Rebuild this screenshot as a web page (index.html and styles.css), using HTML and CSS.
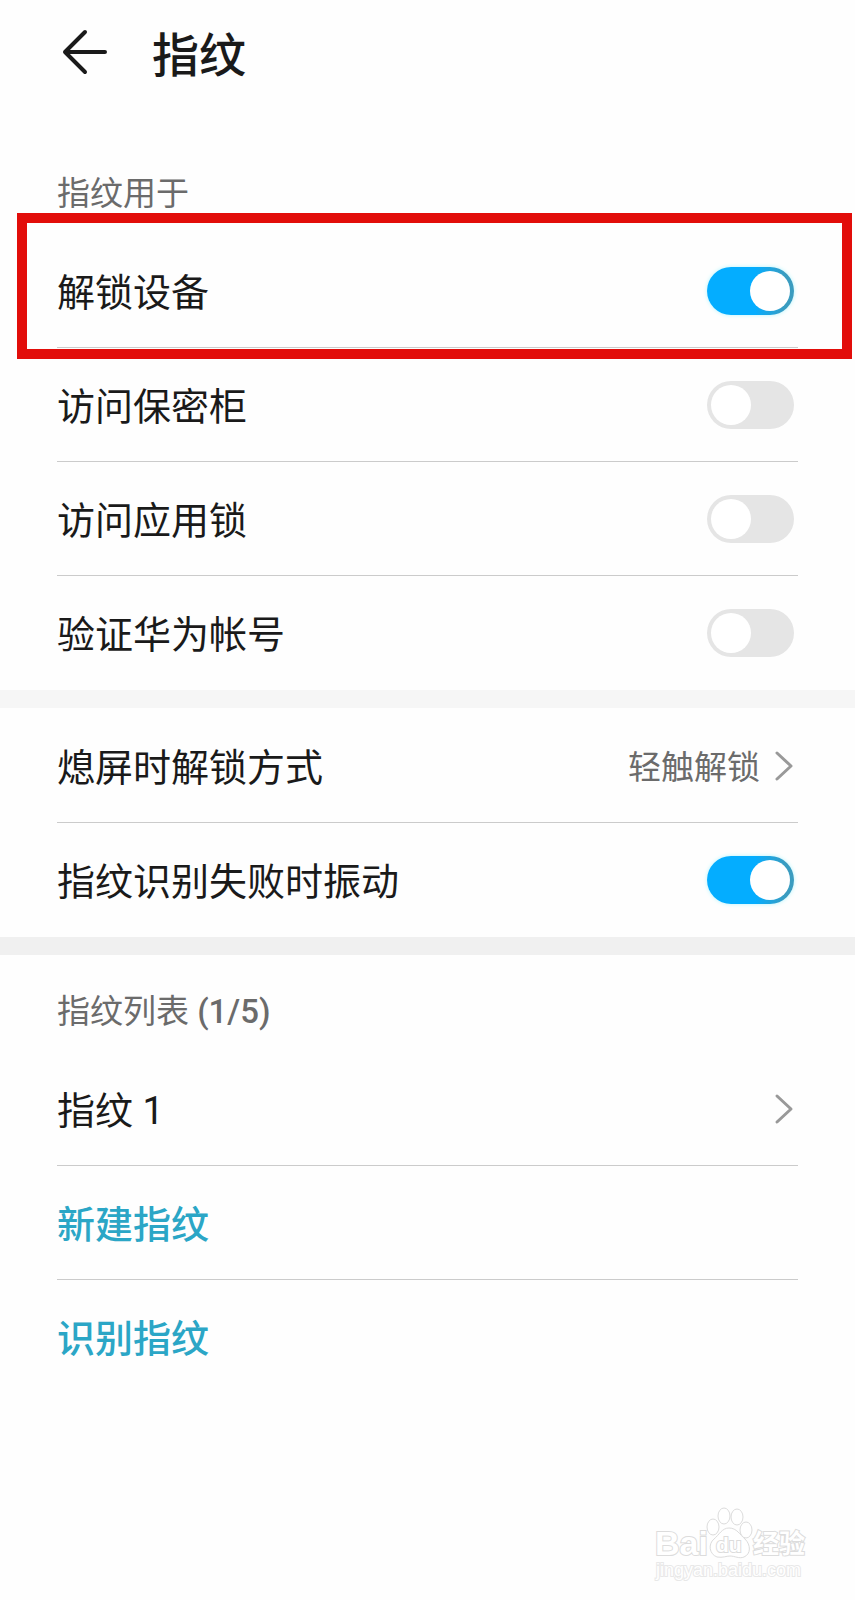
FILE: index.html
```html
<!DOCTYPE html>
<html lang="zh-CN">

	<head>
		<meta charset="UTF-8">
		<meta name="viewport" content="width=device-width, initial-scale=1">
		<title>指纹</title>
		<link rel="stylesheet" href="styles.css">
	</head>

	<body>
		<div class="page">
			<header class="header">
				<button type="button" class="backBtn" aria-label="返回">
					<svg width="48" height="48" viewBox="0 0 48 48">
						<path d="M25 4L5 24L25 44M5 24H45" />
					</svg>
				</button>
				<h1>指纹</h1>
			</header>

			<section class="group">
				<h2>指纹用于</h2>
				<ul>
					<li class="marked">
						<label for="unlock">解锁设备</label>
						<input type="checkbox" class="switch" id="unlock" checked>
					</li>
					<li>
						<label for="safe">访问保密柜</label>
						<input type="checkbox" class="switch" id="safe">
					</li>
					<li>
						<label for="appLock">访问应用锁</label>
						<input type="checkbox" class="switch" id="appLock">
					</li>
					<li>
						<label for="account">验证华为帐号</label>
						<input type="checkbox" class="switch" id="account">
					</li>
				</ul>
			</section>

			<section class="group band">
				<ul>
					<li class="tall">
						<a href="#" class="link">
							<span>熄屏时解锁方式</span>
							<span class="value">轻触解锁</span>
							<svg class="arrow" width="20" height="34" viewBox="0 0 20 34">
								<path d="M3 4L17 17L3 30" />
							</svg>
						</a>
					</li>
					<li>
						<label for="vibrate">指纹识别失败时振动</label>
						<input type="checkbox" class="switch" id="vibrate" checked>
					</li>
				</ul>
			</section>

			<section class="group band dark">
				<h2>指纹列表 <span class="count">(1/5)</span></h2>
				<ul>
					<li>
						<a href="#" class="link">
							<span>指纹 1</span>
							<svg class="arrow" width="20" height="34" viewBox="0 0 20 34">
								<path d="M3 4L17 17L3 30" />
							</svg>
						</a>
					</li>
					<li><button type="button" class="action">新建指纹</button></li>
					<li><button type="button" class="action">识别指纹</button></li>
				</ul>
			</section>

			<!--水印-->
			<footer class="watermark">
				<svg width="160" height="80" viewBox="0 0 160 80">
					<text x="3" y="47" class="wmBig">Bai</text>
					<ellipse cx="61" cy="19" rx="6" ry="8" />
					<ellipse cx="72" cy="8" rx="6" ry="8" />
					<ellipse cx="85" cy="9" rx="6" ry="8" />
					<ellipse cx="94" cy="22" rx="6" ry="8" />
					<path d="M77 20C70 20 67 27 62 31C56 36 57 46 65 49C71 50 74 48 78 48C83 48 87 51 92 49C99 46 99 37 93 31C88 27 85 20 77 20Z" />
					<text x="64" y="44" class="wmDu">du</text>
					<text x="101" y="45" class="wmCn">经验</text>
					<text x="4" y="68" class="wmUrl">jingyan.baidu.com</text>
				</svg>
			</footer>
		</div>
	</body>

</html>
```
FILE: styles.css
```css
* {
	margin: 0;
	padding: 0;
	box-sizing: border-box;
	list-style: none;
}

body {
	background: #fefefe;
	color: #1a1a1a;
	font-family: Roboto, "Noto Sans CJK SC", sans-serif;
	font-size: 38px;
	line-height: 56px;
}

button {
	border: 0;
	background: none;
	font: inherit;
	cursor: pointer;
}

.page {
	display: flex;
	flex-direction: column;
	min-height: 100vh;
}

/*顶部标题*/

.header {
	display: flex;
	align-items: center;
	gap: 44px;
	height: 104px;
	padding: 0 60px;
}

.header h1 {
	padding-top: 8px;
	font-size: 47px;
	font-weight: 500;
}

.backBtn {
	width: 48px;
	height: 48px;
}

.backBtn svg {
	display: block;
	fill: none;
	stroke: #1a1a1a;
	stroke-width: 4;
	stroke-linecap: round;
	stroke-linejoin: round;
}

.header + .group {
	margin-top: 33px;
}

/*分组*/

.group h2 {
	height: 97px;
	padding: 29px 57px 0;
	color: #6b6b6b;
	font-size: 33px;
	font-weight: 400;
}

.group .count {
	font-weight: 500;
}

.group ul {
	padding: 0 57px;
}

.group li {
	position: relative;
	display: flex;
	align-items: center;
	justify-content: space-between;
	height: 114px;
	padding-right: 4px;
}

.group li.tall {
	height: 115px;
}

.group li + li::before {
	content: "";
	position: absolute;
	top: -1px;
	left: 0;
	right: 0;
	height: 1px;
	background: #cbcbcb;
}

.group label,
.link span,
.action {
	padding-top: 4px;
}

.band {
	border-top: 18px solid #f6f6f6;
}

.dark {
	border-top-color: #f0f0f0;
}

/*红框*/

.marked::after {
	content: "";
	position: absolute;
	top: -21px;
	bottom: -11px;
	left: -40px;
	right: -54px;
	border: 10px solid #e20d0a;
	z-index: 1;
	pointer-events: none;
}

/*开关*/

.switch {
	appearance: none;
	flex: none;
	width: 87px;
	height: 48px;
	padding: 4px;
	border-radius: 24px;
	background: #e5e5e5;
	cursor: pointer;
}

.switch::before {
	content: "";
	display: block;
	width: 40px;
	height: 40px;
	border-radius: 50%;
	background: #fff;
}

.switch:checked {
	background: linear-gradient(90deg, #04adff 55%, #3a9cc0 90%);
	box-shadow: 0 0 4px #b5f6ff;
}

.switch:checked::before {
	margin-left: auto;
}

/*链接行*/

.link {
	display: flex;
	flex: 1;
	align-items: center;
	color: inherit;
	text-decoration: none;
}

.value {
	margin-left: auto;
	margin-right: 14px;
	color: #6b6b6b;
	font-size: 33px;
}

.arrow {
	fill: none;
	stroke: #999;
	stroke-width: 3;
	stroke-linecap: round;
	stroke-linejoin: round;
}

.link > span:first-child + .arrow {
	margin-left: auto;
}

.action {
	color: #2ba6c6;
	font-weight: 500;
}

/*水印*/

.watermark {
	align-self: flex-end;
	margin-top: auto;
	padding: 0 43px 12px 0;
}

.watermark svg {
	display: block;
	overflow: visible;
	fill: #fff;
	stroke: #dcdcdc;
	stroke-width: 1;
}

.watermark text {
	font-family: "Liberation Sans", "Noto Sans CJK SC", sans-serif;
	font-weight: bold;
	stroke-width: 2;
	paint-order: stroke;
}

.watermark .wmBig {
	font-size: 34px;
}

.watermark .wmDu {
	font-size: 21px;
}

.watermark .wmCn {
	font-size: 26px;
}

.watermark .wmUrl {
	font-size: 18px;
	font-weight: normal;
	stroke: #e8e8e8;
}
```
